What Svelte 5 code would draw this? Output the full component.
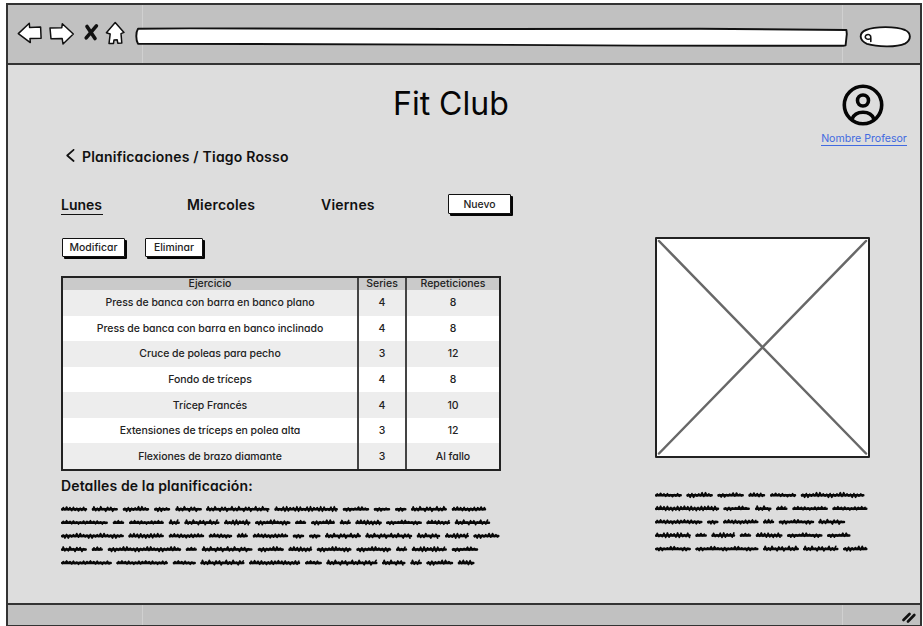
<script>
  const exercises = [
    ['Press de banca con barra en banco plano', '4', '8'],
    ['Press de banca con barra en banco inclinado', '4', '8'],
    ['Cruce de poleas para pecho', '3', '12'],
    ['Fondo de tríceps', '4', '8'],
    ['Trícep Francés', '4', '10'],
    ['Extensiones de tríceps en polea alta', '3', '12'],
    ['Flexiones de brazo diamante', '3', 'Al fallo']
  ];

  // Scribbled words: pairs of start and end, in thirds of a pixel.
  const planLines = [
    [0,78,92,170,185,264,279,327,343,422,435,625,640,830,845,924,938,987,1002,1036,1050,1157,1172,1275],
    [0,140,155,189,204,308,323,356,370,475,489,568,582,688,702,735,750,821,836,869,883,962,975,1082,1096,1167,1181,1287],
    [0,188,202,308,323,429,443,513,527,560,575,681,695,729,744,778,792,899,913,1053,1067,1137,1152,1223,1237,1315],
    [0,77,92,125,140,360,374,407,422,574,590,668,682,753,767,871,886,990,1005,1038,1052,1157,1172,1251],
    [0,152,166,320,335,404,418,550,564,717,732,782,796,949,963,1033,1048,1082,1096,1176,1190,1240]
  ];
  const photoLines = [
    [0,80,94,173,187,266,280,330,345,423,437,628],
    [0,192,205,284,300,349,363,397,412,518,532,637],
    [0,142,156,190,204,310,324,357,371,477,490,570],
    [0,107,121,155,169,240,254,288,302,382,396,502,516,586],
    [0,107,121,310,324,431,444,550,564,637]
  ];

  function scribble(lines) {
    let base = '';
    let waves = '';
    lines.forEach((line, row) => {
      const y = 5 + row * 13.4;
      for (let i = 0; i < line.length; i += 2) {
        const a = line[i] / 3 + 1.2;
        const b = line[i + 1] / 3 - 1;
        base += `M${a.toFixed(1)} ${(y + 0.3).toFixed(1)}H${b.toFixed(1)}`;
        waves += `M${a.toFixed(1)} ${(y + 1).toFixed(1)}`;
        let k = 0;
        for (let x = a + 1; x <= b; x += 1.7) {
          const amp = 0.5 + ((k * k * 3 + k * 2 + line[i + 1] * 3 + row * 2) % 7) * 0.3;
          waves += `L${x.toFixed(1)} ${(y + (k % 2 ? amp : -amp)).toFixed(1)}`;
          k++;
        }
      }
    });
    return { base, waves };
  }
  const plan = scribble(planLines);
  const photo = scribble(photoLines);
</script>

<div class="window">
  <header class="toolbar">
    <svg class="nav" width="110" height="28" viewBox="17 20 110 28">
      <path d="M18.3 33.6 29.3 23.2 29.6 27.4 40.6 27 41.1 38.2 30 38.4 30.3 42.6Z" />
      <path d="M50 28 61.8 27.7 62.3 23.8 73.3 34 63 44 62.2 38.6 51 38.8Z" />
      <path d="M115.2 22.6 124 32.4 121 33.6 121.8 43 117.8 43.2 117.2 39.8 114 39.9 113.5 43.5 109 43.6 110.2 34 106.4 32.8Z" />
      <path class="cross" d="M87 26.5 95 38.5M96.4 25.8 86.2 37.8" />
    </svg>
    <svg class="address" width="713" height="21" viewBox="135 27 713 21">
      <path d="M138 28.7 190 28.4 450 29 700 28.8 846.4 30 846.8 34 845.6 45.4 843 45.8 640 45.6 450 44.6 138 43.7C135.7 40 135.8 32 138 28.7Z" />
    </svg>
    <svg class="search" width="52" height="22" viewBox="859 26 52 22">
      <path d="M866 30C875 26.2 896 26.2 905 30 911.5 33 911.5 40 905 43.6 896 47.6 877 46.8 867 43.8 859 40.5 858.5 33 866 30Z" />
      <path class="lens" d="M870.5 38.6C867 40.6 863.8 37.5 866 35.2 868.6 33.6 871.2 35 870.8 38L870.8 41.4" />
    </svg>
  </header>

  <main>
    <div class="top">
      <h1>Fit Club</h1>
      <div class="profile">
        <svg width="42" height="42" viewBox="0 0 42 42">
          <circle cx="21" cy="21" r="18.7" /><circle cx="21" cy="16.5" r="5.5" />
          <path d="M10 35C13.5 26 28.5 26 32 35" />
        </svg>
        <a href="#profile">Nombre Profesor</a>
      </div>
    </div>
    <div class="crumb">
      <svg width="10" height="14" viewBox="0 0 10 14"><path d="M8.6 0.8 2.2 6.5 8.6 12" /></svg>
      <span>Planificaciones / Tiago Rosso</span>
    </div>
    <div class="columns">
      <section class="left">
        <nav>
          <b class="day active">Lunes</b><b class="day wed">Miercoles</b><b class="day fri">Viernes</b>
          <button class="new">Nuevo</button>
        </nav>
        <div class="actions"><button class="edit">Modificar</button><button class="del">Eliminar</button></div>
        <table>
          <colgroup><col class="c1" /><col class="c2" /><col class="c3" /></colgroup>
          <thead><tr><th>Ejercicio</th><th>Series</th><th>Repeticiones</th></tr></thead>
          <tbody>
            {#each exercises as row}
              <tr>{#each row as cell}<td>{cell}</td>{/each}</tr>
            {/each}
          </tbody>
        </table>
        <h2>Detalles de la planificación:</h2>
        <svg class="scribble" width="440" height="66" viewBox="0 0 440 66"><path class="base" d={plan.base} /><path d={plan.waves} /></svg>
      </section>
      <section class="right">
        <svg class="placeholder" width="215" height="222" viewBox="0 0 215 222">
          <rect x="1" y="1" width="213" height="219" />
          <path d="M4 4 211 216.5M211 4 4 216.5" />
        </svg>
        <svg class="scribble" width="215" height="66" viewBox="0 0 215 66"><path class="base" d={photo.base} /><path d={photo.waves} /></svg>
      </section>
    </div>
  </main>

  <footer>
    <svg width="14" height="13" viewBox="0 0 14 13"><path d="M1.5 10 7.5 4M6 11.5 12.3 5" /></svg>
  </footer>
</div>

<style>
  :global(body) { background: #fff; overflow: hidden; }
  .window {
    box-sizing: border-box; width: 916px; height: 623px; margin: 3px 0 0 6px;
    border: 2px solid #333; border-bottom-width: 1px;
    background: #ddd; color: #111; font-family: Inter, "Liberation Sans", sans-serif;
    font-feature-settings: "cv11"; display: flex; flex-direction: column;
  }
  svg { display: block; fill: none; stroke: #111; stroke-linecap: round; stroke-linejoin: round; flex: none; }
  .toolbar, footer {
    background: linear-gradient(#d0d0d0, #d0d0d0) 134px 0 / 1px 100% no-repeat,
      linear-gradient(#d0d0d0, #d0d0d0) 834px 0 / 1px 100% no-repeat, #c1c1c1;
    box-sizing: border-box; flex: none; display: flex;
  }
  .toolbar { height: 60px; border-bottom: 2px solid #333; align-items: flex-start; padding: 15px 0 0 9px; }
  .nav path { fill: #fff; stroke-width: 1.5; }
  .nav .cross { stroke-width: 3.6; }
  .address { margin: 7px 0 0 8px; }
  .address path, .search path { fill: #fff; stroke-width: 1.9; }
  .search { margin: 6px 0 0 11px; }
  .search .lens { fill: none; stroke-width: 1.6; }
  main { flex: 1; min-height: 0; }
  .top { height: 81px; display: flex; justify-content: flex-end; }
  h1 { margin: 18px 0 0; width: 116px; font-size: 32px; line-height: 42px; font-weight: 400; letter-spacing: 0; white-space: nowrap; color: #050505; }
  .profile { width: 90px; margin: 19px 12px 0 309px; display: flex; flex-direction: column; align-items: center; }
  .profile svg { stroke-width: 3.6; stroke: #050505; }
  .profile a { color: #416ae0; font-size: 10.6px; line-height: 13px; margin-top: 6px; border-bottom: 1px solid #416ae0; text-decoration: none; white-space: nowrap; position: relative; left: 1px; }
  .crumb { height: 20px; display: flex; align-items: center; margin-left: 57px; font-size: 14px; font-weight: 600; letter-spacing: 0.2px; white-space: nowrap; }
  .crumb svg { stroke-width: 1.7; }
  .crumb span { margin-left: 7px; }
  .columns { display: flex; }
  .left { width: 452px; margin-left: 53px; padding-top: 29px; }
  nav { display: flex; height: 24px; align-items: flex-start; }
  .day { flex: none; font-size: 14px; font-weight: 600; line-height: 20px; height: 20px; letter-spacing: 0.2px; white-space: nowrap; }
  .active { width: 42px; border-bottom: 1.5px solid #111; box-sizing: border-box; letter-spacing: 0; }
  .wed { width: 70px; margin-left: 84px; }
  .fri { width: 54px; margin-left: 64px; }
  button {
    font: 500 10.4px/15px Inter, "Liberation Sans", sans-serif; font-feature-settings: "cv11"; flex: none;
    background: #fff; border: 1.5px solid #111; border-radius: 1px; box-shadow: 2px 2px 0 #050505;
    color: #222; padding: 0; height: 19px; box-sizing: border-box; white-space: nowrap;
  }
  .new { width: 63px; margin-left: 73px; height: 20px; line-height: 17px; margin-top: -1px; }
  .actions { display: flex; margin: 19px 0 0 1px; height: 38px; }
  .edit { width: 63px; }
  .del { width: 58px; margin-left: 20px; }
  table { border-collapse: separate; border-spacing: 0; table-layout: fixed; width: 440px; box-sizing: border-box; border: 2px solid #222; font-size: 10.5px; font-weight: 500; height: 195px; color: #222; }
  .c1 { width: 294px; } .c2 { width: 48px; }
  th, td { padding: 0; text-align: center; font-weight: 500; white-space: nowrap; }
  td { letter-spacing: -0.05px; }
  th { height: 12px; line-height: 12px; background: #cacaca; }
  td { height: 25.4px; line-height: 25px; background: #fff; }
  tbody tr:nth-child(odd) td { background: #ededed; }
  th + th, td + td { border-left: 2px solid #444; }
  h2 { font-size: 14px; line-height: 20px; font-weight: 600; letter-spacing: 0.13px; margin: 5px 0 8px; white-space: nowrap; }
  .scribble path { stroke: #080808; stroke-width: 1.6; }
  .scribble .base { stroke-width: 2.5; }
  .right { margin-left: 142px; padding-top: 71px; }
  .placeholder rect { fill: #fff; stroke-width: 2; stroke: #222; }
  .placeholder path { stroke: #686868; stroke-width: 2.5; }
  .right .scribble { margin-top: 31px; }
  footer { height: 22px; border-top: 2px solid #333; justify-content: flex-end; padding: 5px 4px 0 0; }
  footer svg { stroke-width: 2.6; }
</style>
